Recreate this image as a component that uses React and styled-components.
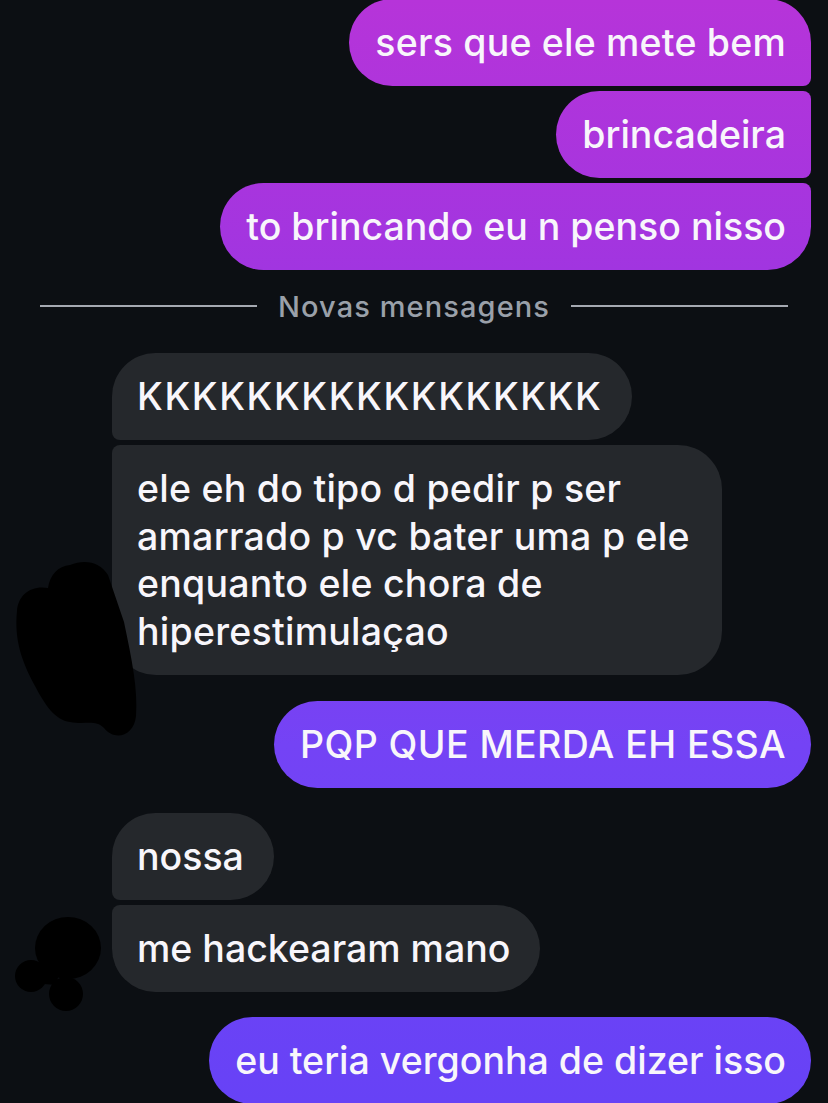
import React from "react";
import styled, { createGlobalStyle, css } from "styled-components";

const Global = createGlobalStyle`
  html, body {
    margin: 0;
    padding: 0;
    background: #0c0f13;
  }
  body {
    font-family: Inter, "Noto Sans", "Liberation Sans", sans-serif;
    -webkit-font-smoothing: antialiased;
  }
`;

const Page = styled.div`
  width: 828px;
  height: 1103px;
  overflow: hidden;
  background: #0c0f13;
  display: flex;
  flex-direction: column;
  box-sizing: border-box;
  padding-right: 17px;
`;

const OwnGroup = styled.div`
  display: flex;
  flex-direction: column;
  align-items: flex-end;
  gap: 5px;
  margin-top: ${(p) => p.$top || 0}px;
`;

const TheirGroup = styled.div`
  position: relative;
  display: flex;
  flex-direction: column;
  align-items: flex-start;
  gap: 5px;
  padding-left: 112px;
  margin-top: ${(p) => p.$top || 0}px;
`;

const BIG = 44;
const SMALL = 8;

const radii = (pos, side) => {
  const top = pos === "first" || pos === "single" ? BIG : SMALL;
  const bottom = pos === "last" || pos === "single" ? BIG : SMALL;
  if (side === "own") return `${BIG}px ${top}px ${bottom}px ${BIG}px`;
  return `${top}px ${BIG}px ${BIG}px ${bottom}px`;
};

const Bubble = styled.div`
  box-sizing: border-box;
  padding: 20px 25px 20px 26px;
  font-size: 37.5px;
  line-height: ${(p) => (p.$multi ? 47.5 : 47)}px;
  font-weight: 500;
  letter-spacing: ${(p) => p.$spacing || 0}px;
  color: #f8f6fb;
  white-space: nowrap;
  border-radius: ${(p) => radii(p.$pos, p.$side)};
  ${(p) =>
    p.$side === "own"
      ? css`
          background: linear-gradient(
            180deg,
            #b634d9 0px,
            #a135e0 270px,
            #8a3bea 480px,
            #7443f5 745px,
            #6742f6 1103px
          );
          background-attachment: fixed;
        `
      : css`
          background: #25282c;
          padding-left: 25px;
          padding-right: ${p.$multi ? 32 : 30}px;
        `}
`;

const FirstOwnGroup = styled(OwnGroup)`
  margin-top: -1px;
`;

const Divider = styled.div`
  display: flex;
  align-items: center;
  gap: 21px;
  margin: 20px 23px 31px 40px;
  height: 32px;
  color: #9aa0a9;
  font-size: 29px;
  font-weight: 500;
  letter-spacing: 1.1px;
  &::before,
  &::after {
    content: "";
    flex: 1;
    height: 2px;
    background: #a5a9b1;
  }
`;

const Scribble = styled.svg`
  position: absolute;
  left: 0;
  top: 0;
  overflow: visible;
  pointer-events: none;
`;

const Own = ({ pos, spacing, children }) => (
  <Bubble $side="own" $pos={pos} $spacing={spacing}>
    {children}
  </Bubble>
);

const Their = ({ pos, multi, spacing, children }) => (
  <Bubble $side="their" $pos={pos} $multi={multi} $spacing={spacing}>
    {children}
  </Bubble>
);

export default function App() {
  return (
    <>
      <Global />
      <Page>
        <FirstOwnGroup>
          <Own pos="first" spacing={0.2}>sers que ele mete bem</Own>
          <Own pos="middle">brincadeira</Own>
          <Own pos="last">to brincando eu n penso nisso</Own>
        </FirstOwnGroup>

        <Divider>Novas mensagens</Divider>

        <TheirGroup>
          <Their pos="first" spacing={1.6}>KKKKKKKKKKKKKKKKK</Their>
          <Their pos="last" multi spacing={0.25}>
            ele eh do tipo d pedir p ser
            <br />
            amarrado p vc bater uma p ele
            <br />
            enquanto ele chora de
            <br />
            hiperestimulaçao
          </Their>
          <Scribble width="828" height="400" viewBox="0 353 828 400">
            <path
              fill="#000"
              d="M70 565 C85 559 100 562 108 575 L124 622 C132 660 138 690 136 716 C134 737 114 741 104 728 C95 719 86 725 70 722 C55 720 45 705 35 686 C22 662 14 640 17 611 C18 595 31 585 48 588 C50 575 58 566 70 565 Z"
            />
          </Scribble>
        </TheirGroup>

        <OwnGroup $top={26}>
          <Own pos="single" spacing={0.4}>PQP QUE MERDA EH ESSA</Own>
        </OwnGroup>

        <TheirGroup $top={25}>
          <Their pos="first">nossa</Their>
          <Their pos="last">me hackearam mano</Their>
          <Scribble width="828" height="300" viewBox="0 813 828 300">
            <ellipse cx="68" cy="948" rx="33" ry="31" fill="#000" />
            <circle cx="31" cy="976" r="16" fill="#000" />
            <circle cx="66" cy="994" r="17" fill="#000" />
            <path d="M48 960 L60 970 L56 985 L44 984 Z" fill="#000" />
          </Scribble>
        </TheirGroup>

        <OwnGroup $top={25}>
          <Own pos="single">eu teria vergonha de dizer isso</Own>
        </OwnGroup>
      </Page>
    </>
  );
}
